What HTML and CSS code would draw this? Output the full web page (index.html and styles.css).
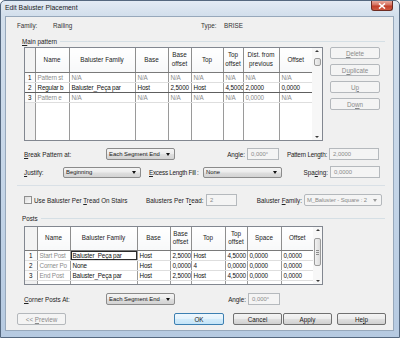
FILE: index.html
```html
<!DOCTYPE html>
<html>
<head>
<meta charset="utf-8">
<title>Edit Baluster Placement</title>
<link rel="stylesheet" href="styles.css">
</head>
<body>
<div class="window">
  <div class="titlebar">
    <span class="title">Edit Baluster Placement</span>
    <span class="close"><svg width="8" height="6" viewBox="0 0 8 6"><path d="M1 0.5 L7 5.5 M7 0.5 L1 5.5" stroke="#fff" stroke-width="1.6" fill="none"/></svg></span>
  </div>
  <div class="client">
    <div class="info">
      <span class="k-fam">Family:</span><span class="v-fam">Railing</span>
      <span class="k-type">Type:</span><span>BRISE</span>
    </div>

    <div class="group-head"><span><u>M</u>ain pattern</span><i class="rule"></i></div>

    <div class="main-area">
      <div class="grid">
        <table class="tbl main">
          <colgroup><col><col><col><col><col><col><col><col><col></colgroup>
          <thead>
            <tr><th class="rh"></th><th>Name</th><th>Baluster Family</th><th>Base</th><th>Base<br>offset</th><th>Top</th><th>Top<br>offset</th><th>Dist. from<br>previous</th><th>Offset</th></tr>
          </thead>
          <tbody>
            <tr class="gray"><td class="rh">1</td><td>Pattern st</td><td>N/A</td><td>N/A</td><td>N/A</td><td>N/A</td><td>N/A</td><td>N/A</td><td>N/A</td></tr>
            <tr class="cur"><td class="rh">2</td><td>Regular b</td><td>Baluster_Peça par</td><td>Host</td><td>2,5000</td><td>Host</td><td>4,5000</td><td>2,0000</td><td>0,0000</td></tr>
            <tr class="gray"><td class="rh">3</td><td>Pattern e</td><td>N/A</td><td>N/A</td><td>N/A</td><td>N/A</td><td>N/A</td><td>0,0000</td><td>N/A</td></tr>
            <tr class="filler"><td class="rh"></td><td></td><td></td><td></td><td></td><td></td><td></td><td></td><td></td></tr>
          </tbody>
        </table>
        <div class="vscroll s-main">
          <i class="arr up"></i><i class="thumb"></i><i class="spacer"></i><i class="arr down"></i>
        </div>
      </div>
      <div class="side-buttons">
        <span class="btn dis"><span><u>D</u>elete</span></span>
        <span class="btn dis"><span>D<u>u</u>plicate</span></span>
        <span class="btn dis"><span>U<u>p</u></span></span>
        <span class="btn dis"><span>Do<u>w</u>n</span></span>
      </div>
    </div>

    <div class="row r-break">
      <span class="lbl w-break"><u>B</u>reak Pattern at:</span>
      <span class="combo w-seg">Each Segment End<i class="tri"></i></span>
      <span class="lbl rt w-angle">Angle:</span>
      <span class="field dis w-anglef">0,000°</span>
      <span class="lbl rt w-plen">Pattern Length:</span>
      <span class="field dis w-wide">2,0000</span>
    </div>

    <div class="row r-just">
      <span class="lbl w-just"><u>J</u>ustify:</span>
      <span class="combo small w-begin">Beginning<i class="tri"></i></span>
      <span class="lbl w-excess"><u>E</u>xcess Length Fill :</span>
      <span class="combo small w-none">None<i class="tri"></i></span>
      <span class="lbl rt w-spacing">Spa<u>c</u>ing:</span>
      <span class="field dis w-wide">0,0000</span>
    </div>

    <div class="sep"></div>

    <div class="row r-check">
      <i class="checkbox"></i>
      <span class="lbl w-use">Use Baluster Per <u>T</u>read On Stairs</span>
      <span class="lbl w-bpt">Balusters Per T<u>r</u>ead:</span>
      <span class="field dis w-bptf">2</span>
      <span class="lbl rt w-bfam">Baluster <u>F</u>amily:</span>
      <span class="combo dis w-bfamc">M_Baluster - Square : 2<i class="tri"></i></span>
    </div>

    <div class="group-head posts-head"><span>Posts</span><i class="rule"></i></div>

    <div class="posts-area">
      <div class="grid pgrid">
        <table class="tbl posts">
          <colgroup><col><col><col><col><col><col><col><col><col></colgroup>
          <thead>
            <tr><th class="rh"></th><th>Name</th><th>Baluster Family</th><th>Base</th><th>Base<br>offset</th><th>Top</th><th>Top<br>offset</th><th>Space</th><th>Offset</th></tr>
          </thead>
          <tbody>
            <tr><td class="rh">1</td><td class="g">Start Post</td><td class="focus">Baluster_Peça par</td><td>Host</td><td>2,5000</td><td>Host</td><td>4,5000</td><td>0,0000</td><td>0,0000</td></tr>
            <tr><td class="rh">2</td><td class="g">Corner Po</td><td>None</td><td>Host</td><td>0,0000</td><td>4</td><td>0,0000</td><td>0,0000</td><td>0,0000</td></tr>
            <tr><td class="rh">3</td><td class="g">End Post</td><td>Baluster_Peça par</td><td>Host</td><td>2,5000</td><td>Host</td><td>4,5000</td><td>0,0000</td><td>0,0000</td></tr>
            <tr class="filler"><td class="rh"></td><td></td><td></td><td></td><td></td><td></td><td></td><td></td><td></td></tr>
          </tbody>
        </table>
        <div class="vscroll s-posts">
          <i class="arr up"></i><i class="thumb grip"><b></b><b></b><b></b></i><i class="spacer"></i><i class="arr down"></i>
        </div>
      </div>
    </div>

    <div class="row r-corner">
      <span class="lbl w-break"><u>C</u>orner Posts At:</span>
      <span class="combo w-seg">Each Segment End<i class="tri"></i></span>
      <span class="lbl rt w-angle2">Angle:</span>
      <span class="field dis w-anglef">0,000°</span>
    </div>

    <div class="row r-buttons">
      <span class="btn dis w-prev"><span>&lt;&lt; <u>P</u>review</span></span>
      <span class="btn def w-ok">OK</span>
      <span class="btn w-cancel">Cancel</span>
      <span class="btn w-apply">Apply</span>
      <span class="btn w-help"><span>He<u>l</u>p</span></span>
    </div>
  </div>
</div>
</body>
</html>
```

FILE: styles.css
```css
* { box-sizing: border-box; margin: 0; padding: 0; }
html, body { width: 400px; height: 338px; overflow: hidden; background: #fff; }
body {
  font-family: "Liberation Sans", Arial, sans-serif;
  font-size: 6.3px;
  color: #1a1a1a;
}
u { text-decoration: underline; text-underline-offset: 1px; }
i, b { display: block; font-style: normal; }

.window {
  width: 400px;
  height: 338px;
  display: flex;
  flex-direction: column;
  background: linear-gradient(180deg, #e3ebf4 0, #d3dfec 14px, #c3d4e7 60%, #b6cae1 100%);
  border: 1px solid #55687f;
  border-radius: 5px 5px 0 0;
}
.titlebar {
  height: 15px;
  flex: none;
  display: flex;
  align-items: flex-start;
  justify-content: space-between;
  padding-left: 4px;
}
.title { font-size: 6.8px; color: #1e1e1e; margin-top: 3px; }
.close {
  width: 22px;
  height: 10px;
  margin-right: 6px;
  background: linear-gradient(180deg, #e9a99c 0, #d46f5d 45%, #c13e29 55%, #cf5a42 100%);
  border: 1px solid #6c2b22;
  border-top: 0;
  border-radius: 0 0 3px 3px;
  display: flex;
  align-items: center;
  justify-content: center;
}

.client {
  flex: 1;
  margin: 0 5px 6px 4px;
  background: #f0f0f0;
  border: 1px solid #97a8bb;
  display: flex;
  flex-direction: column;
}

.info {
  height: 10px;
  margin-top: 3px;
  padding-left: 11px;
  display: flex;
  align-items: center;
  color: #333;
}
.k-fam { width: 36px; }
.v-fam { width: 148px; }
.k-type { width: 23px; }

.group-head {
  height: 10px;
  margin-top: 6px;
  padding-left: 16px;
  margin-right: 8px;
  display: flex;
  align-items: center;
  color: #222;
}
.group-head .rule { flex: 1; border-top: 1px solid #d5dfe5; margin-left: 3px; }

.main-area {
  height: 94px;
  margin-top: 1px;
  padding-left: 18px;
  display: flex;
  gap: 7px;
}
.grid {
  width: 299px;
  height: 94px;
  border: 1px solid #828790;
  background: #fff;
  display: flex;
}
.pgrid { height: 59px; }

.tbl {
  border-collapse: collapse;
  table-layout: fixed;
  height: 100%;
  flex: none;
}
.main { width: 287px; }
.posts { width: 288px; }
.main col:nth-child(1) { width: 10px; }
.main col:nth-child(2) { width: 34px; }
.main col:nth-child(3) { width: 66px; }
.main col:nth-child(4) { width: 33px; }
.main col:nth-child(5) { width: 23px; }
.main col:nth-child(6) { width: 32px; }
.main col:nth-child(7) { width: 20px; }
.main col:nth-child(8) { width: 36px; }
.main col:nth-child(9) { width: 33px; }
.posts col:nth-child(1) { width: 12px; }
.posts col:nth-child(2) { width: 33px; }
.posts col:nth-child(3) { width: 67px; }
.posts col:nth-child(4) { width: 33px; }
.posts col:nth-child(5) { width: 21px; }
.posts col:nth-child(6) { width: 34px; }
.posts col:nth-child(7) { width: 22px; }
.posts col:nth-child(8) { width: 34px; }
.posts col:nth-child(9) { width: 32px; }

.tbl th {
  height: 24px;
  font-weight: normal;
  line-height: 8.5px;
  text-align: center;
  color: #222;
  background: linear-gradient(180deg, #ffffff 0, #f7f8f9 100%);
  border-left: 1px solid #8e8e8e;
  border-bottom: 1px solid #7a7a7a;
  overflow: hidden;
  white-space: nowrap;
}
.posts th { height: 23px; }
.tbl th:first-child, .tbl td:first-child { border-left: 0; }
.tbl td {
  height: 10px;
  padding: 0 0 0 2px;
  line-height: 9px;
  letter-spacing: -0.15px;
  white-space: nowrap;
  overflow: hidden;
  text-overflow: clip;
  border-left: 1px solid #9a9a9a;
  border-bottom: 1px solid #dedede;
  color: #111;
}
.tbl td.rh { text-align: center; padding: 0; background: #fbfbfb; letter-spacing: 0; }
.tbl th.rh { background: #f3f3f3; }
.tbl tr.filler td { height: auto; border-bottom: 0; }
.tbl tr.filler td.rh { background: #f1f1f1; }
.tbl tr.gray td, .tbl td.g { color: #8c8c8c; }
.tbl tr.gray td.rh { color: #111; }
.tbl tr.cur td { border-top: 1px solid #5e5e5e; border-bottom: 1px solid #5e5e5e; }
.tbl td.focus { box-shadow: inset 0 0 0 1px #2b2b2b; }

.vscroll {
  flex: 1;
  background: #f7f7f7;
  display: flex;
  flex-direction: column;
  align-items: center;
  padding: 2px 0;
}
.arr { width: 0; height: 0; border-left: 2px solid transparent; border-right: 2px solid transparent; }
.arr.up { border-bottom: 2px solid #3a3a3a; }
.arr.down { border-top: 2px solid #3a3a3a; }
.thumb {
  width: 7px;
  height: 8px;
  margin-top: 6px;
  border: 1px solid #9b9b9b;
  border-radius: 2px;
  background: linear-gradient(90deg, #f1f1f1, #dcdcdc);
}
.s-posts .thumb {
  height: 28px;
  margin-top: 7px;
  display: flex;
  flex-direction: column;
  align-items: center;
  justify-content: center;
  gap: 1px;
}
.grip b { width: 3px; height: 1px; background: #8c8c8c; }
.spacer { flex: 1; }

.side-buttons {
  display: flex;
  flex-direction: column;
  gap: 5px;
}
.btn {
  height: 12px;
  border: 1px solid #707070;
  border-radius: 2px;
  background: linear-gradient(180deg, #f4f4f4 0, #ececec 45%, #dedede 55%, #d0d0d0 100%);
  display: flex;
  align-items: center;
  justify-content: center;
  color: #1a1a1a;
  white-space: nowrap;
}
.side-buttons .btn { width: 50px; }
.btn.dis {
  border-color: #b4b8bc;
  background: #f4f4f4;
  color: #8a8a8a;
}
.btn.def {
  border-color: #3c7fb1;
  background: linear-gradient(180deg, #eef7fd 0, #e3f2fc 50%, #d2ebfa 55%, #c4e4f8 100%);
}

.row {
  height: 12px;
  padding-left: 18px;
  display: flex;
  align-items: center;
  flex: none;
}
.r-break { margin-top: 7px; }
.r-just { margin-top: 6px; }
.r-check { margin-top: 8px; }
.r-corner { margin-top: 8px; }
.r-buttons { margin-top: 8px; padding-left: 11px; }

.lbl { white-space: nowrap; color: #222; }
.lbl.rt { text-align: right; padding-right: 2px; }

.combo {
  height: 12px;
  border: 1px solid #8b8b8b;
  border-radius: 2px;
  background: linear-gradient(180deg, #f4f4f4 0, #ececec 45%, #dedede 55%, #d3d3d3 100%);
  display: flex;
  align-items: center;
  justify-content: space-between;
  padding: 0 4px 0 2px;
  white-space: nowrap;
  overflow: hidden;
  color: #1a1a1a;
  font-size: 5.9px;
}
.combo.small { height: 11px; }
.combo.dis { border-color: #b4b8bc; background: #f4f4f4; color: #8a8a8a; letter-spacing: -0.1px; }
.tri {
  width: 0; height: 0; flex: none;
  margin-left: 2px;
  border-left: 2.5px solid transparent;
  border-right: 2.5px solid transparent;
  border-top: 3px solid #111;
}
.combo.dis .tri { border-top-color: #9a9a9a; }

.field {
  height: 12px;
  border: 1px solid #b5b9bd;
  background: #f4f4f4;
  display: flex;
  align-items: center;
  padding-left: 3px;
  color: #8a8a8a;
  white-space: nowrap;
  font-size: 5.9px;
}

.w-break { width: 82px; }
.w-seg { width: 69px; }
.w-angle { width: 72px; }
.w-angle2 { width: 73px; }
.w-anglef { width: 32px; }
.w-plen { width: 50px; letter-spacing: -0.2px; }
.w-wide { width: 50px; }
.w-just { width: 39px; }
.w-begin { width: 78px; }
.w-excess { width: 54px; margin-left: 8px; letter-spacing: -0.25px; }
.w-none { width: 79px; }
.w-spacing { width: 48px; }

.sep {
  height: 1px;
  margin: 7px 8px 0 11px;
  background: #d9e0e6;
  flex: none;
}

.checkbox {
  width: 8px;
  height: 8px;
  border: 1px solid #8f8f8f;
  background: linear-gradient(135deg, #dcdcdc, #fbfbfb);
  flex: none;
}
.w-use { width: 114px; padding-left: 2px; }
.w-bpt { width: 60px; }
.w-bptf { width: 31px; }
.w-bfam { width: 67px; }
.w-bfamc { width: 78px; }

.posts-head { margin-top: 7px; }
.posts-area {
  height: 59px;
  margin-top: 3px;
  padding-left: 18px;
  display: flex;
  flex: none;
}

.w-prev { width: 49px; }
.w-ok { width: 50px; margin-left: 108px; }
.w-cancel { width: 49px; margin-left: 9px; }
.w-apply { width: 49px; margin-left: 1px; }
.w-help { width: 49px; margin-left: 5px; }
```
